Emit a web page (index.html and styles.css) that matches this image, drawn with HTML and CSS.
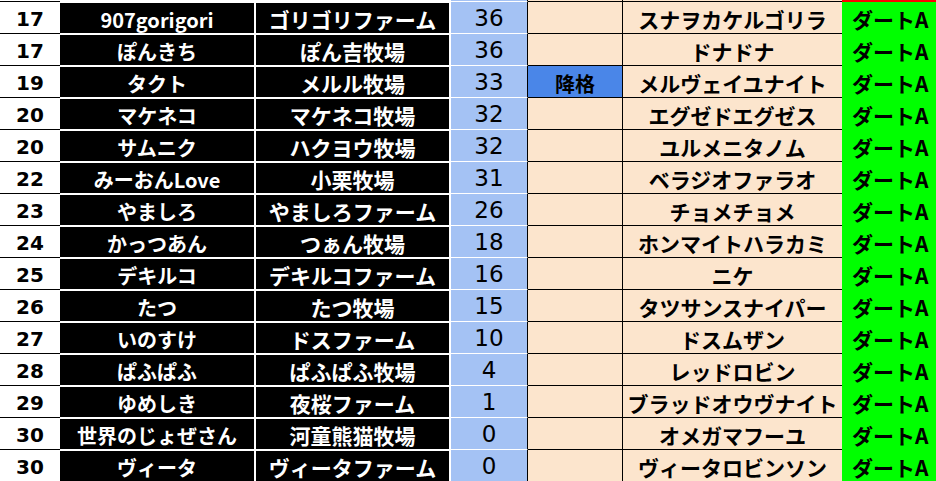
FILE: index.html
```html
<!DOCTYPE html>
<html lang="ja">
<head>
<meta charset="utf-8">
<link rel="stylesheet" href="styles.css">
</head>
<body>
<div class="sheet">
  <div class="row strip">
    <div class="c rank"></div><div class="c owner"></div><div class="c farm"></div><div class="c pts"></div><div class="c note"></div><div class="c horse"></div><div class="c cls red"></div>
  </div>
  <div class="row first"><div class="c rank">17</div><div class="c owner">907gorigori</div><div class="c farm">ゴリゴリファーム</div><div class="c pts">36</div><div class="c note"></div><div class="c horse">スナヲカケルゴリラ</div><div class="c cls">ダートA</div></div>
  <div class="row"><div class="c rank">17</div><div class="c owner">ぽんきち</div><div class="c farm">ぽん吉牧場</div><div class="c pts">36</div><div class="c note"></div><div class="c horse">ドナドナ</div><div class="c cls">ダートA</div></div>
  <div class="row"><div class="c rank">19</div><div class="c owner">タクト</div><div class="c farm">メルル牧場</div><div class="c pts">33</div><div class="c note down">降格</div><div class="c horse">メルヴェイユナイト</div><div class="c cls">ダートA</div></div>
  <div class="row"><div class="c rank">20</div><div class="c owner">マケネコ</div><div class="c farm">マケネコ牧場</div><div class="c pts">32</div><div class="c note"></div><div class="c horse">エグゼドエグゼス</div><div class="c cls">ダートA</div></div>
  <div class="row"><div class="c rank">20</div><div class="c owner">サムニク</div><div class="c farm">ハクヨウ牧場</div><div class="c pts">32</div><div class="c note"></div><div class="c horse">ユルメニタノム</div><div class="c cls">ダートA</div></div>
  <div class="row"><div class="c rank">22</div><div class="c owner">みーおんLove</div><div class="c farm">小栗牧場</div><div class="c pts">31</div><div class="c note"></div><div class="c horse">ベラジオファラオ</div><div class="c cls">ダートA</div></div>
  <div class="row"><div class="c rank">23</div><div class="c owner">やましろ</div><div class="c farm">やましろファーム</div><div class="c pts">26</div><div class="c note"></div><div class="c horse">チョメチョメ</div><div class="c cls">ダートA</div></div>
  <div class="row"><div class="c rank">24</div><div class="c owner">かっつあん</div><div class="c farm">つぁん牧場</div><div class="c pts">18</div><div class="c note"></div><div class="c horse">ホンマイトハラカミ</div><div class="c cls">ダートA</div></div>
  <div class="row"><div class="c rank">25</div><div class="c owner">デキルコ</div><div class="c farm">デキルコファーム</div><div class="c pts">16</div><div class="c note"></div><div class="c horse">ニケ</div><div class="c cls">ダートA</div></div>
  <div class="row"><div class="c rank">26</div><div class="c owner">たつ</div><div class="c farm">たつ牧場</div><div class="c pts">15</div><div class="c note"></div><div class="c horse">タツサンスナイパー</div><div class="c cls">ダートA</div></div>
  <div class="row"><div class="c rank">27</div><div class="c owner">いのすけ</div><div class="c farm">ドスファーム</div><div class="c pts">10</div><div class="c note"></div><div class="c horse">ドスムザン</div><div class="c cls">ダートA</div></div>
  <div class="row"><div class="c rank">28</div><div class="c owner">ぱふぱふ</div><div class="c farm">ぱふぱふ牧場</div><div class="c pts">4</div><div class="c note"></div><div class="c horse">レッドロビン</div><div class="c cls">ダートA</div></div>
  <div class="row"><div class="c rank">29</div><div class="c owner">ゆめしき</div><div class="c farm">夜桜ファーム</div><div class="c pts">1</div><div class="c note"></div><div class="c horse">ブラッドオウヴナイト</div><div class="c cls">ダートA</div></div>
  <div class="row"><div class="c rank">30</div><div class="c owner">世界のじょぜさん</div><div class="c farm">河童熊猫牧場</div><div class="c pts">0</div><div class="c note"></div><div class="c horse">オメガマフーユ</div><div class="c cls">ダートA</div></div>
  <div class="row"><div class="c rank">30</div><div class="c owner">ヴィータ</div><div class="c farm">ヴィータファーム</div><div class="c pts">0</div><div class="c note"></div><div class="c horse">ヴィータロビンソン</div><div class="c cls">ダートA</div></div>
</div>
</body>
</html>
```
FILE: styles.css
```css
html, body {
  margin: 0;
  padding: 0;
  background: #ffffff;
}
.sheet {
  width: 936px;
  height: 481px;
  overflow: hidden;
  font-family: "Noto Sans CJK JP", "Noto Sans", sans-serif;
  font-weight: 700;
  color: #000;
}
.row {
  display: grid;
  grid-template-columns: 60px 196px 195px 77px 95px 219px 1fr;
  height: 32px;
}
.row.strip {
  height: 1px;
}
.c {
  box-sizing: border-box;
  display: flex;
  align-items: center;
  justify-content: center;
  white-space: nowrap;
  border-top: 1px solid #000;
  font-size: 21px;
  line-height: 1;
  padding-top: 4px;
}
.strip .c {
  border-top: 0;
  padding: 0;
}
.rank {
  background: #ffffff;
  border-top-color: #000;
  font-family: "DejaVu Sans", "Noto Sans CJK JP", sans-serif;
  font-size: 20px;
  padding-top: 3px;
}
.owner, .farm {
  background: #000;
  color: #fff;
  border-top-color: #fff;
  border-right: 2px solid #fff;
  box-shadow: inset 0 1px 0 #fff;
}
.owner {
  font-size: 20px;
}
.pts {
  background: #a4c2f4;
  border-top-color: #fff;
  border-right: 1px solid #000;
  font-family: "DejaVu Sans", "Noto Sans", sans-serif;
  font-weight: 400;
  font-size: 23px;
  padding-top: 1px;
}
.note {
  background: #fce5cd;
  border-right: 1px solid #000;
}
.note.down {
  background: #4a86e8;
  font-size: 20px;
}
.horse {
  background: #fce5cd;
  border-top-color: #000;
}
.cls {
  background: #00ff00;
  border-top-color: #00ff00;
  justify-content: flex-start;
  padding-left: 10px;
}
.strip .red {
  background: #ff0000;
}
.first .cls {
  border-top-color: #ff0000;
}
```
